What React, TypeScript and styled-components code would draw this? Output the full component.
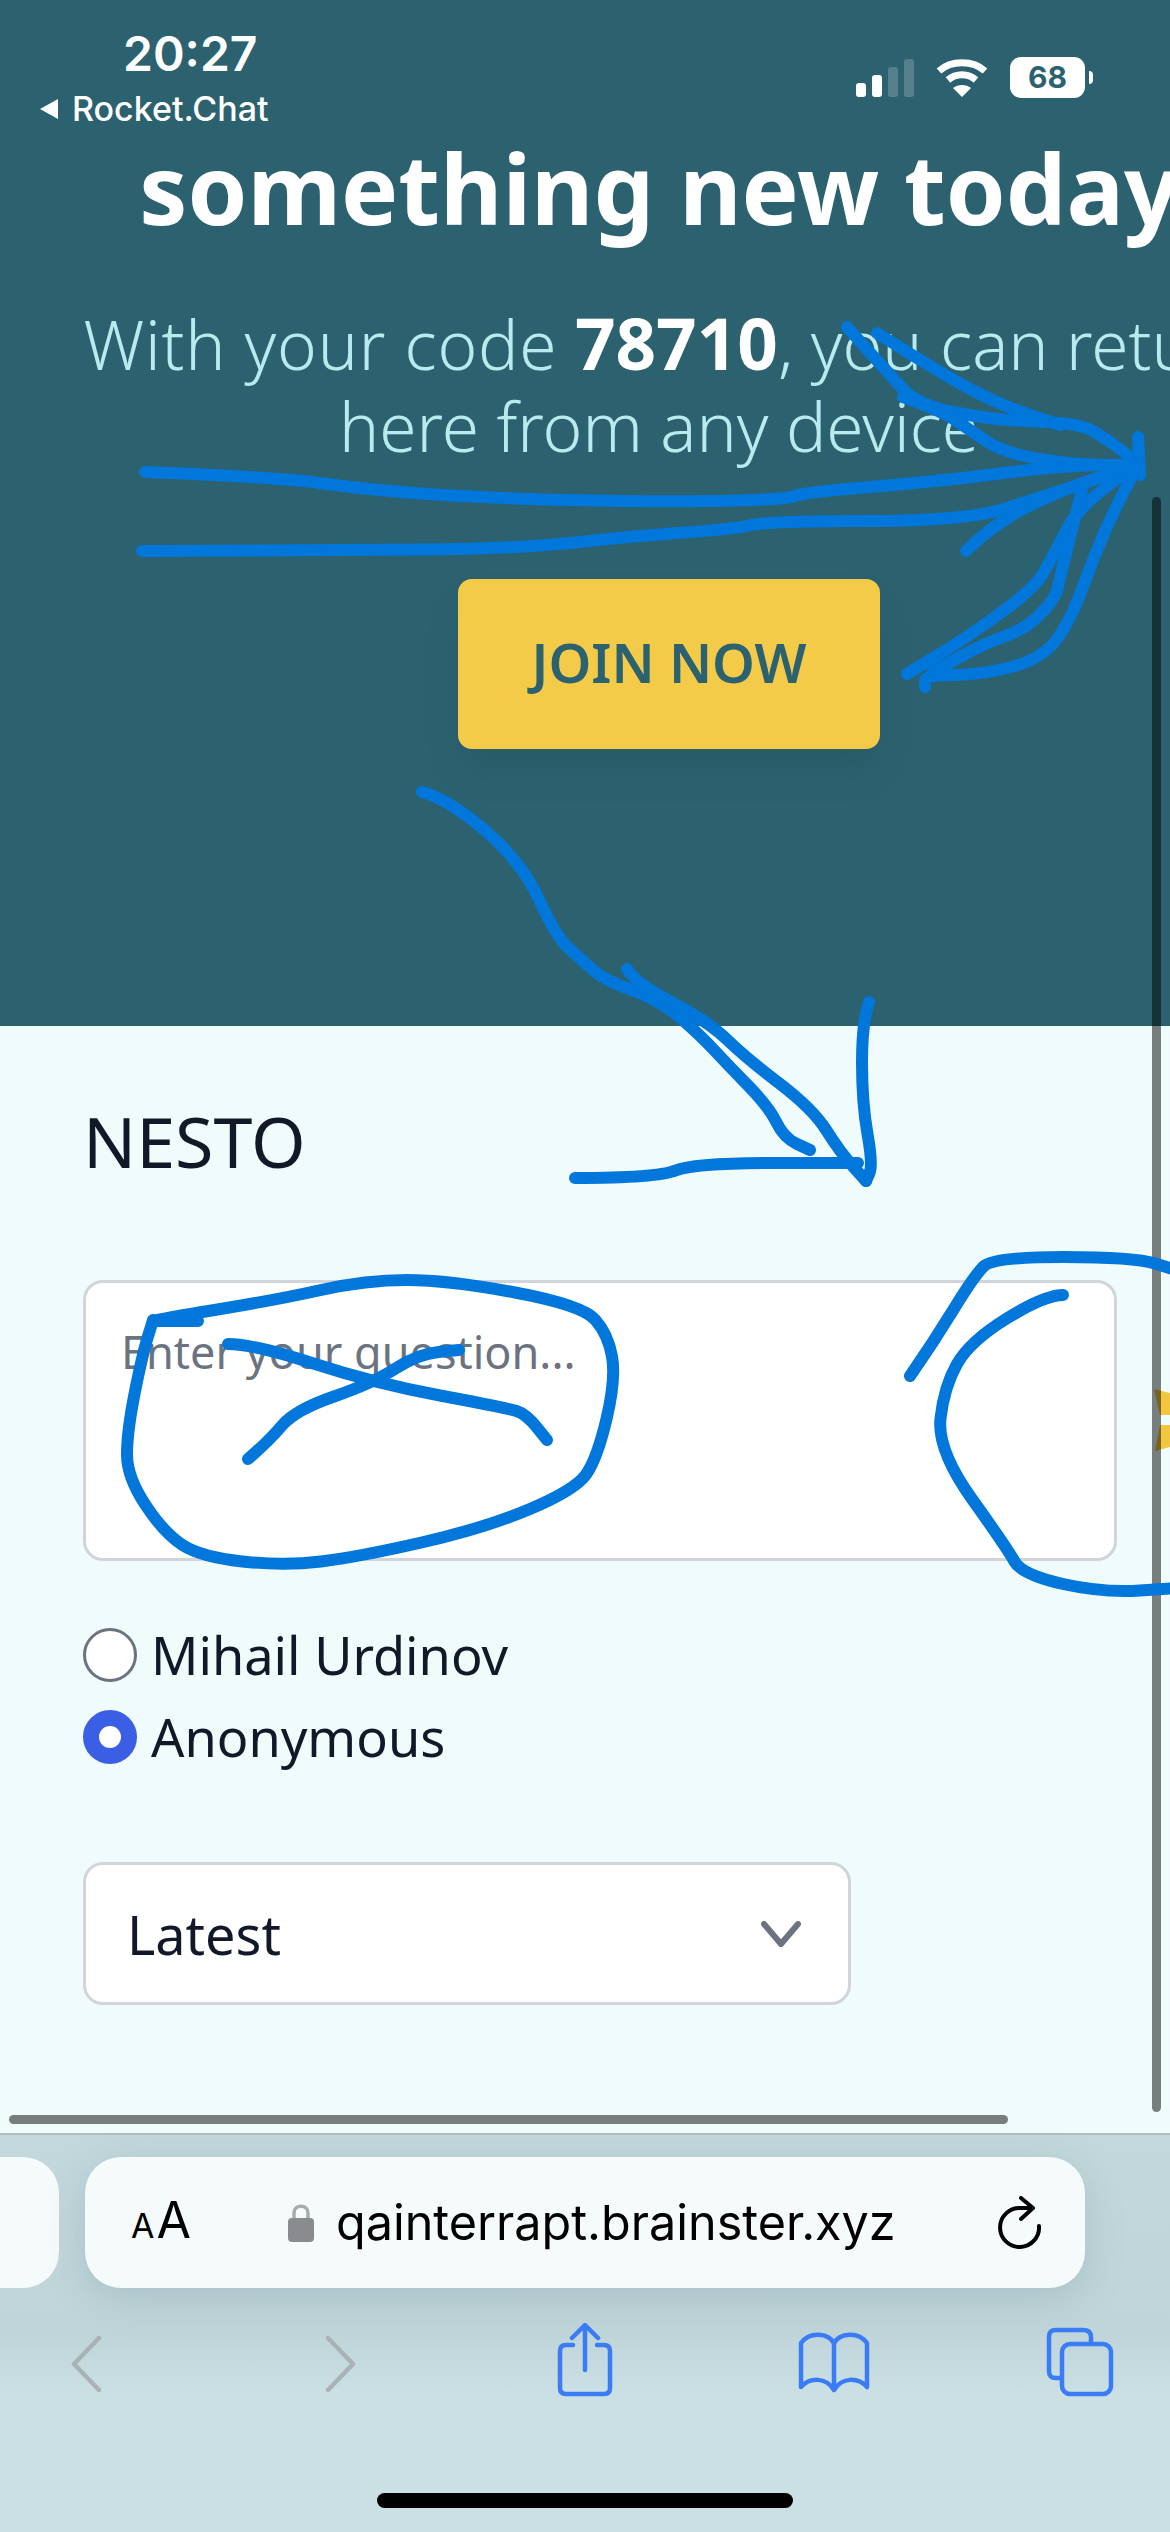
import React from 'react';
import styled, { createGlobalStyle } from 'styled-components';

const GlobalStyle = createGlobalStyle`
  html, body {
    margin: 0;
    padding: 0;
    background: #2c6270;
  }
  * {
    box-sizing: border-box;
  }
`;

const bodyFont = `"Noto Sans", "Open Sans", sans-serif`;
const systemFont = `Inter, "Liberation Sans", sans-serif`;

const Screen = styled.div`
  position: relative;
  width: 1170px;
  height: 2532px;
  overflow: hidden;
  display: flex;
  flex-direction: column;
  font-family: ${bodyFont};
`;

const Hero = styled.section`
  height: 1026px;
  flex-shrink: 0;
  background: #2c6270;
  display: flex;
  flex-direction: column;
`;

const StatusBar = styled.div`
  height: 128px;
  padding: 30px 0 0 38px;
  display: flex;
  justify-content: space-between;
  flex-shrink: 0;
`;

const StatusLeft = styled.div`
  display: flex;
  flex-direction: column;
  color: #fff;
  font-family: ${systemFont};
`;

const Time = styled.div`
  margin-left: 85px;
  font-size: 48px;
  font-weight: 600;
  line-height: 48px;
`;

const BackApp = styled.div`
  margin-top: 13px;
  display: flex;
  align-items: center;
  gap: 12px;
  font-size: 34px;
  font-weight: 500;
  line-height: 36px;
`;

const StatusRight = styled.div`
  padding: 27px 77px 0 0;
  display: flex;
  align-items: flex-start;
`;

const SignalIcon = styled.svg`
  margin-top: 2px;
`;

const WifiIcon = styled.svg`
  margin: 2px 0 0 22px;
`;

const Battery = styled.div`
  width: 75px;
  height: 41px;
  border-radius: 11px;
  background: #fff;
  color: #2c6270;
  font-family: ${systemFont};
  font-size: 30px;
  font-weight: 700;
  line-height: 41px;
  text-align: center;
  margin-left: 22px;
`;

const BatteryCap = styled.div`
  width: 4px;
  height: 13px;
  margin: 14px 0 0 4px;
  border-radius: 0 6px 6px 0;
  background: #fff;
`;

const HeroBody = styled.div`
  width: 1318px;
  display: flex;
  flex-direction: column;
  align-items: center;
  flex-shrink: 0;
`;

const Heading = styled.h1`
  margin: 0;
  font-size: 96px;
  font-weight: 700;
  line-height: 120px;
  color: #fff;
  white-space: nowrap;
`;

const Lead = styled.p`
  margin: 55px 0 0;
  font-size: 67.5px;
  font-weight: 300;
  line-height: 82px;
  color: #b9eaee;
  text-align: center;
  white-space: nowrap;

  strong {
    color: #fff;
    font-weight: 700;
    font-size: 71px;
    line-height: 1;
  }
`;

const LeadFirstLine = styled.span`
  padding-left: 24px;
`;

const LeadIn = styled.span`
  letter-spacing: 0.8px;
`;

const JoinButton = styled.button`
  margin: 112px 0 0 20px;
  width: 422px;
  height: 170px;
  padding: 0 0 5px;
  border: 0;
  border-radius: 14px;
  background: #f3cb49;
  color: #2c6270;
  font-family: ${bodyFont};
  font-size: 54.5px;
  font-weight: 600;
  box-shadow: 0 24px 40px rgba(0, 0, 0, 0.07);
`;

const Content = styled.section`
  flex: 1;
  background: #f0fbfb;
  padding: 74px 53px 0 83px;
  color: #111827;
`;

const Title = styled.h2`
  margin: 0;
  font-size: 70px;
  font-weight: 400;
  line-height: 82px;
`;

const QuestionBox = styled.div`
  margin-top: 98px;
  height: 281px;
  padding: 41px 35px;
  border: 3px solid #d1d5db;
  border-radius: 20px;
  background: #fff;
  color: #6b7280;
  font-size: 45px;
  line-height: 56px;
`;

const RadioGroup = styled.div`
  margin-top: 66px;
  display: flex;
  flex-direction: column;
  gap: 26px;
`;

const RadioRow = styled.label`
  height: 56px;
  display: flex;
  align-items: center;
  gap: 14px;
  font-size: 52.3px;
  line-height: 56px;
`;

const RadioDot = styled.span<{ $checked?: boolean }>`
  width: 54px;
  height: 54px;
  border-radius: 50%;
  flex-shrink: 0;
  background: #fff;
  border: ${(p) => (p.$checked ? '16px solid #3b5fe4' : '3px solid #6b7280')};
`;

const SortSelect = styled.div`
  margin-top: 97px;
  width: 768px;
  height: 143px;
  padding: 0 47px 0 41px;
  border: 3px solid #d1d5db;
  border-radius: 20px;
  background: #fff;
  display: flex;
  align-items: center;
  justify-content: space-between;
  font-size: 54px;
`;

const BrowserBar = styled.footer`
  height: 399px;
  flex-shrink: 0;
  background: linear-gradient(#c2d8dc 0, #c0d5da 200px, #cbe0e5 260px);
  border-top: 2px solid #b4bcbf;
  display: flex;
  flex-direction: column;
`;

const TabRow = styled.div`
  margin-top: 22px;
  display: flex;
  gap: 26px;
`;

const SideTab = styled.div`
  width: 59px;
  height: 131px;
  border-radius: 0 36px 36px 0;
  background: #f5fafa;
`;

const AddressPill = styled.div`
  width: 1000px;
  height: 131px;
  padding: 0 42px 0 46px;
  border-radius: 36px;
  background: #f5fafa;
  box-shadow: 0 10px 40px rgba(70, 110, 125, 0.2);
  display: flex;
  align-items: center;
  font-family: ${systemFont};
  color: #000;
`;

const TextSize = styled.div`
  width: 157px;
  font-size: 50px;
  font-weight: 400;
  line-height: 60px;

  small {
    font-size: 34px;
    margin-right: 2px;
  }
`;

const Url = styled.div`
  flex: 1;
  margin-left: 22px;
  font-size: 48.5px;
  line-height: 60px;
  white-space: nowrap;
`;

const ToolRow = styled.div`
  margin-top: 36px;
  padding-left: 36px;
  display: flex;
  gap: 148.5px;
`;

const ToolSlot = styled.div<{ $dx?: number; $dy?: number }>`
  width: 100px;
  height: 80px;
  display: flex;
  align-items: center;
  justify-content: center;
  transform: translate(${(p) => p.$dx ?? 0}px, ${(p) => p.$dy ?? 0}px);
`;

const HomeIndicator = styled.div`
  width: 416px;
  height: 15px;
  margin: 89px auto 0;
  border-radius: 8px;
  background: #000;
`;

const ScrollThumb = styled.div<{ $horizontal?: boolean }>`
  position: absolute;
  background: rgba(0, 0, 0, 0.5);
  border-radius: 5px;
  ${(p) =>
    p.$horizontal
      ? 'left: 9px; top: 2115px; width: 999px; height: 9px;'
      : 'left: 1152px; top: 497px; width: 9px; height: 1615px;'}
`;

const SendIconPeek = styled.svg`
  position: absolute;
  left: 1150px;
  top: 1384px;
`;

const Scribbles = styled.svg`
  position: absolute;
  left: 0;
  top: 0;
  pointer-events: none;
`;

type Point = [number, number];

const strokes: Point[][] = [
  // long arrow lines at the top
  [[145, 472], [276, 477], [370, 490], [485, 498], [650, 502], [784, 500], [806, 492], [933, 482], [1067, 465], [1138, 465]],
  [[142, 551], [330, 550], [515, 549], [634, 536], [735, 529], [769, 521], [966, 521], [1045, 496], [1138, 465]],
  [[966, 551], [992, 525], [1060, 490], [1138, 465]],
  [[847, 327], [888, 373], [918, 405], [992, 420], [1078, 423], [1104, 437], [1138, 463]],
  [[877, 333], [940, 373], [1000, 405], [1060, 425]],
  [[903, 397], [940, 410], [970, 430], [1004, 453], [1075, 465], [1138, 465]],
  [[1138, 437], [1140, 475]],
  [[1138, 465], [1082, 500], [1052, 558], [1034, 589], [963, 640], [907, 674]],
  [[1138, 465], [1119, 500], [1097, 549], [1067, 629], [1037, 661], [978, 675], [925, 675], [925, 687]],
  [[1082, 490], [1060, 576], [1056, 598], [1026, 629], [985, 643], [933, 672]],
  // arrow down to the title
  [[422, 792], [448, 799], [522, 862], [556, 937], [582, 960], [604, 980], [660, 1000], [701, 1036], [728, 1065], [769, 1107], [784, 1138], [810, 1150]],
  [[627, 969], [634, 982], [709, 1022], [746, 1058], [813, 1109], [840, 1152], [866, 1181]],
  [[869, 1002], [862, 1022], [862, 1103], [873, 1165], [866, 1181]],
  [[575, 1178], [657, 1178], [694, 1163], [858, 1163]],
  // ring and cross over the placeholder
  [[198, 1321], [160, 1321], [153, 1320], [276, 1300], [366, 1280], [448, 1280], [582, 1305], [608, 1334], [616, 1379], [597, 1459], [575, 1490], [485, 1528], [358, 1557], [284, 1566], [201, 1557], [164, 1533], [127, 1477], [127, 1432], [142, 1356], [153, 1320]],
  [[228, 1344], [254, 1344], [373, 1383], [507, 1408], [526, 1414], [547, 1440]],
  [[248, 1459], [269, 1441], [295, 1410], [373, 1383], [418, 1354], [459, 1350]],
  // right hand ring
  [[910, 1376], [933, 1343], [974, 1276], [993, 1257], [1134, 1257], [1176, 1270]],
  [[1063, 1295], [1045, 1295], [970, 1341], [944, 1387], [937, 1450], [1007, 1548], [1022, 1575], [1104, 1593], [1176, 1588]],
];

// draws a hand stroke as quadratic curves through the midpoints
const toPath = (pts: Point[]) => {
  let d = `M${pts[0][0]} ${pts[0][1]}`;
  for (let i = 1; i < pts.length - 1; i++) {
    const mx = (pts[i][0] + pts[i + 1][0]) / 2;
    const my = (pts[i][1] + pts[i + 1][1]) / 2;
    d += ` Q${pts[i][0]} ${pts[i][1]} ${mx} ${my}`;
  }
  const last = pts[pts.length - 1];
  return `${d} L${last[0]} ${last[1]}`;
};

const blue = '#3a7bf6';

const App = () => (
  <Screen>
    <GlobalStyle />
    <Hero>
      <StatusBar>
        <StatusLeft>
          <Time>20:27</Time>
          <BackApp>
            <svg width="22" height="22" viewBox="0 0 22 22">
              <path d="M20 1V21L2 11Z" fill="#fff" />
            </svg>
            Rocket.Chat
          </BackApp>
        </StatusLeft>
        <StatusRight>
          <SignalIcon width="58" height="38" viewBox="0 0 58 38">
            <rect x="0" y="24" width="10" height="14" rx="3" fill="#fff" />
            <rect x="16" y="16" width="10" height="22" rx="3" fill="#fff" />
            <rect x="32" y="8" width="10" height="30" rx="3" fill="#fff" opacity="0.2" />
            <rect x="48" y="0" width="10" height="38" rx="3" fill="#fff" opacity="0.2" />
          </SignalIcon>
          <WifiIcon width="52" height="38" viewBox="0 0 52 38">
            <path d="M3 12C15 1 37 1 49 12" stroke="#fff" strokeWidth="7" fill="none" />
            <path d="M12 21C20 14 32 14 40 21" stroke="#fff" strokeWidth="7" fill="none" />
            <path d="M17 29C22 25 30 25 35 29L26 38Z" fill="#fff" />
          </WifiIcon>
          <Battery>68</Battery>
          <BatteryCap />
        </StatusRight>
      </StatusBar>
      <HeroBody>
        <Heading>something new today</Heading>
        <Lead>
          <LeadFirstLine>
            <LeadIn>With your code</LeadIn> <strong>78710</strong>, you can return
          </LeadFirstLine>
          <br />
          here from any device
        </Lead>
        <JoinButton>JOIN NOW</JoinButton>
      </HeroBody>
    </Hero>
    <Content>
      <Title>NESTO</Title>
      <QuestionBox>Enter your question...</QuestionBox>
      <RadioGroup>
        <RadioRow>
          <RadioDot />
          Mihail Urdinov
        </RadioRow>
        <RadioRow>
          <RadioDot $checked />
          Anonymous
        </RadioRow>
      </RadioGroup>
      <SortSelect>
        Latest
        <svg width="40" height="26" viewBox="0 0 40 26">
          <path d="M3 3L20 23L37 3" stroke="#6b7280" strokeWidth="6" fill="none" strokeLinecap="round" strokeLinejoin="round" />
        </svg>
      </SortSelect>
    </Content>
    <BrowserBar>
      <TabRow>
        <SideTab />
        <AddressPill>
          <TextSize>
            <small>A</small>A
          </TextSize>
          <svg width="26" height="40" viewBox="0 0 26 40">
            <path d="M6 18V10C6 1 20 1 20 10V18" stroke="#a9abae" strokeWidth="3.5" fill="none" />
            <rect x="0" y="15" width="26" height="24" rx="4" fill="#8a8b8f" />
          </svg>
          <Url>qainterrapt.brainster.xyz</Url>
          <svg width="46" height="54" viewBox="0 0 46 54">
            <path d="M42 30A19.5 19.5 0 1 1 23 12H33" stroke="#000" strokeWidth="4" fill="none" strokeLinecap="round" />
            <path d="M24 2L36 12L24 23" stroke="#000" strokeWidth="4" fill="none" strokeLinecap="round" strokeLinejoin="round" />
          </svg>
        </AddressPill>
      </TabRow>
      <ToolRow>
        <ToolSlot>
          <svg width="32" height="56" viewBox="0 0 32 56">
            <path d="M29 2L4 28L29 54" stroke="#a9b3b6" strokeWidth="4.5" fill="none" strokeLinecap="round" strokeLinejoin="round" />
          </svg>
        </ToolSlot>
        <ToolSlot $dx={6}>
          <svg width="32" height="56" viewBox="0 0 32 56">
            <path d="M3 2L28 28L3 54" stroke="#a9b3b6" strokeWidth="4.5" fill="none" strokeLinecap="round" strokeLinejoin="round" />
          </svg>
        </ToolSlot>
        <ToolSlot $dx={2} $dy={-4}>
          <svg width="56" height="74" viewBox="0 0 56 74">
            <path d="M16 22H9C5 22 3 24 3 28V65C3 69 5 71 9 71H47C51 71 53 69 53 65V28C53 24 51 22 47 22H40" stroke={blue} strokeWidth="4.5" fill="none" strokeLinecap="round" />
            <path d="M28 47V3M15 15L28 2L41 15" stroke={blue} strokeWidth="4.5" fill="none" strokeLinecap="round" strokeLinejoin="round" />
          </svg>
        </ToolSlot>
        <ToolSlot $dx={2} $dy={-2}>
          <svg width="72" height="62" viewBox="0 0 72 62">
            <path d="M36 12C30 2 12 0 3 12V56C12 46 28 46 36 59C44 46 60 46 69 56V12C60 0 42 2 36 12Z" stroke={blue} strokeWidth="4.5" fill="none" strokeLinejoin="round" />
            <path d="M36 12V58" stroke={blue} strokeWidth="4.5" />
          </svg>
        </ToolSlot>
        <ToolSlot $dy={-2}>
          <svg width="68" height="70" viewBox="0 0 68 70">
            <path d="M15 51H10C5 51 3 49 3 44V10C3 5 5 3 10 3H37C42 3 45 5 45 10V17" stroke={blue} strokeWidth="4.5" fill="none" />
            <rect x="16" y="17" width="49" height="50" rx="8" stroke={blue} strokeWidth="4.5" fill="none" />
          </svg>
        </ToolSlot>
      </ToolRow>
      <HomeIndicator />
    </BrowserBar>
    <SendIconPeek width="20" height="72" viewBox="0 0 20 72">
      <path d="M4 5L20 9V31H10Z M10 41H20V63L5 67Z" fill="#f3c63f" />
    </SendIconPeek>
    <ScrollThumb />
    <ScrollThumb $horizontal />
    <Scribbles width="1170" height="2532" viewBox="0 0 1170 2532">
      {strokes.map((pts, i) => (
        <path
          key={i}
          d={toPath(pts)}
          stroke="#0177db"
          strokeWidth="12"
          fill="none"
          strokeLinecap="round"
          strokeLinejoin="round"
        />
      ))}
    </Scribbles>
  </Screen>
);

export default App;
